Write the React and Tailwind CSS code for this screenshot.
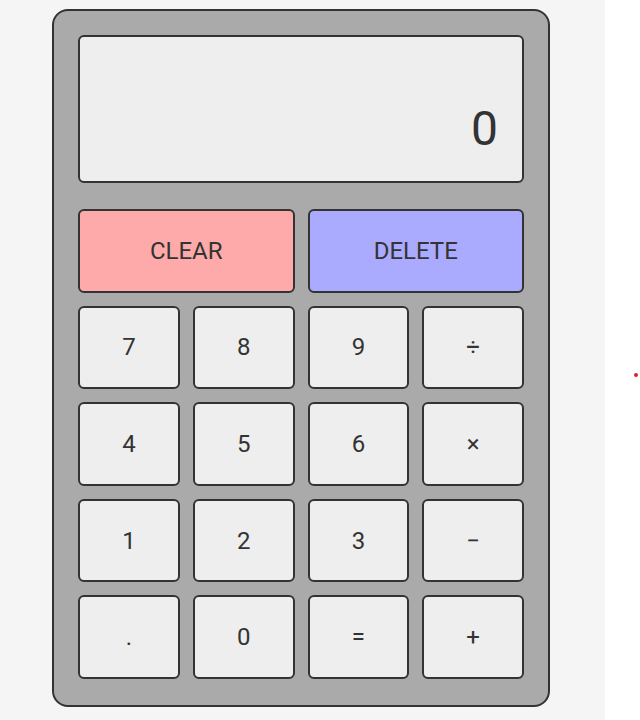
const keys = ["7", "8", "9", "÷", "4", "5", "6", "×", "1", "2", "3", "−", ".", "0", "=", "+"];

const App = () => {
  return (
    <div className="relative flex min-h-[720px] bg-white font-['Roboto',sans-serif] text-[#333]">
      {/* Left pane */}
      <div className="w-[605px] bg-[#f5f5f5] pt-[9px]">
        {/* Calculator */}
        <div className="ml-[52px] w-[498px] rounded-2xl border-2 border-[#333] bg-[#aaa] px-6 pt-6 pb-[26px]">
          {/* Display */}
          <div className="mb-[26px] flex h-[148px] items-end justify-end rounded-md border-2 border-[#333] bg-[#eee] px-6 pb-[24px]">
            <span className="text-5xl leading-[normal]">0</span>
          </div>

          {/* Buttons */}
          <div className="grid grid-cols-4 gap-[13px]">
            <button className="col-span-2 h-[83.6px] rounded-md border-2 border-[#333] bg-[#ffaaaa] text-2xl">
              CLEAR
            </button>
            <button className="col-span-2 h-[83.6px] rounded-md border-2 border-[#333] bg-[#aaaaff] text-2xl">
              DELETE
            </button>
            {keys.map((k) => (
              <button
                key={k}
                className="h-[83.6px] rounded-md border-2 border-[#333] bg-[#eee] text-2xl"
              >
                {k}
              </button>
            ))}
          </div>
        </div>
      </div>

      {/* Red dot */}
      <div className="absolute left-[634px] top-[373px] h-[4px] w-[4px] rounded-full bg-[#e02020]" />
    </div>
  );
};

export default App;
